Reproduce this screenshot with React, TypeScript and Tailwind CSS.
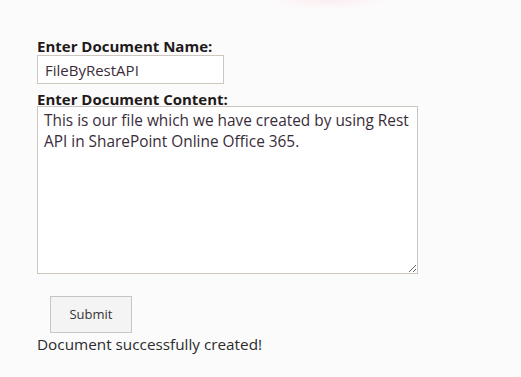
import { useState } from 'react'

export default function App() {
  const [name, setName] = useState<string>('FileByRestAPI')
  const [content, setContent] = useState<string>(
    'This is our file which we have created by using Rest API in SharePoint Online Office 365.'
  )
  return (
    <div className="w-[521px] h-[377px] overflow-hidden bg-[#fcfbfb] bg-[radial-gradient(ellipse_60px_10px_at_330px_0px,#fbeef1,transparent)] text-[#2b2b2b] font-['Open_Sans',sans-serif]">
      <div className="pt-[37px] pl-[37px]">
        <label className="block text-[15px] leading-[18px] font-bold text-[#1f1a1a]">Enter Document Name:</label>
        <input
          value={name}
          onChange={(e) => setName(e.target.value)}
          className="block w-[187px] h-[29px] px-[7px] bg-white border border-[#cdc6be] text-[15px] text-[#3a2d3a] outline-none"
        />
        <label className="block mt-[6px] text-[15px] leading-[18px] font-bold text-[#1f1a1a]">Enter Document Content:</label>
        <textarea
          value={content}
          onChange={(e) => setContent(e.target.value)}
          className="block w-[381px] h-[168px] mt-[-2px] px-[6px] pt-[3px] pb-[2px] bg-white border border-[#cdc6be] text-[15.4px] leading-[21px] text-[#3a2d3a] outline-none resize"
        />
        <button
          type="button"
          className="block ml-[13px] mt-[22px] w-[82px] h-[37px] bg-[#f4f4f4] border border-[#c6c6c6] text-[13px] text-[#333]"
        >
          Submit
        </button>
        <div className="mt-[1px] text-[15.3px] leading-[20px] text-[#2b2b2b]">Document successfully created!</div>
      </div>
    </div>
  )
}
